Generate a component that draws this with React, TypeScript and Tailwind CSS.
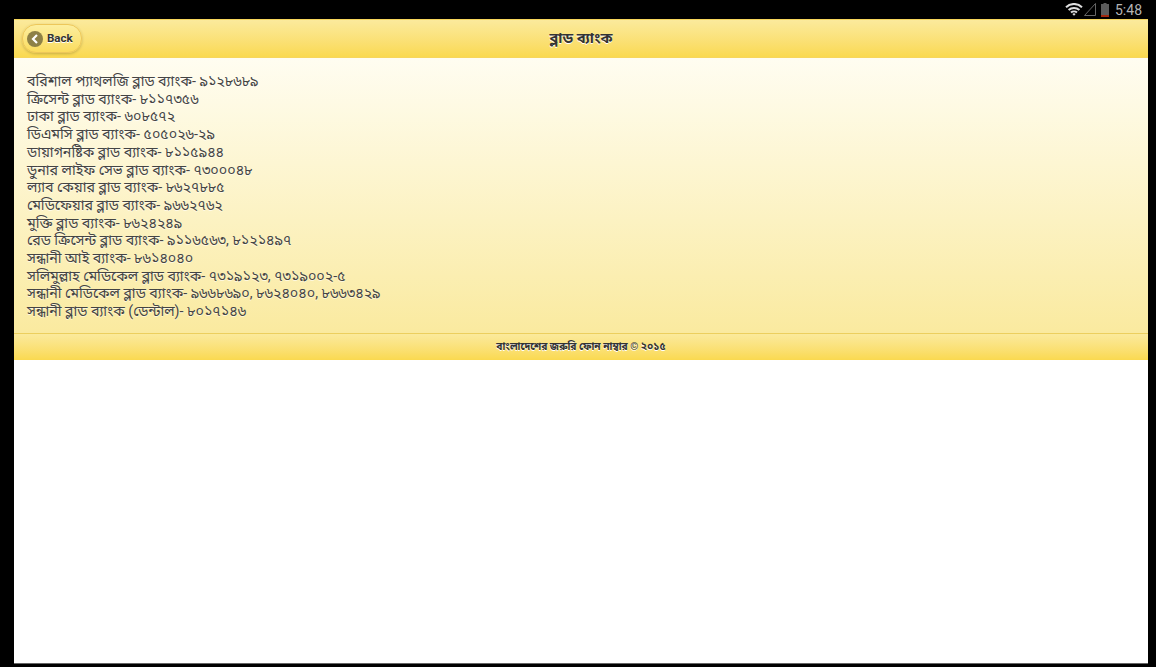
const lines = [
  "বরিশাল প্যাথলজি ব্লাড ব্যাংক- ৯১২৮৬৮৯",
  "ক্রিসেন্ট ব্লাড ব্যাংক- ৮১১৭৩৫৬",
  "ঢাকা ব্লাড ব্যাংক- ৬০৮৫৭২",
  "ডিএমসি ব্লাড ব্যাংক- ৫০৫০২৬-২৯",
  "ডায়াগনষ্টিক ব্লাড ব্যাংক- ৮১১৫৯৪৪",
  "ডুনার লাইফ সেভ ব্লাড ব্যাংক- ৭৩০০০৪৮",
  "ল্যাব কেয়ার ব্লাড ব্যাংক- ৮৬২৭৮৮৫",
  "মেডিফেয়ার ব্লাড ব্যাংক- ৯৬৬২৭৬২",
  "মুক্তি ব্লাড ব্যাংক- ৮৬২৪২৪৯",
  "রেড ক্রিসেন্ট ব্লাড ব্যাংক- ৯১১৬৫৬৩, ৮১২১৪৯৭",
  "সন্ধানী আই ব্যাংক- ৮৬১৪০৪০",
  "সলিমুল্লাহ মেডিকেল ব্লাড ব্যাংক- ৭৩১৯১২৩, ৭৩১৯০০২-৫",
  "সন্ধানী মেডিকেল ব্লাড ব্যাংক- ৯৬৬৮৬৯০, ৮৬২৪০৪০, ৮৬৬৩৪২৯",
  "সন্ধানী ব্লাড ব্যাংক (ডেন্টাল)- ৮০১৭১৪৬",
];

export default function App() {
  return (
    <div className="h-[667px] w-[1156px] overflow-hidden bg-black flex flex-col font-['Roboto','Noto_Sans','Noto_Sans_Bengali','Lohit_Bengali','FreeSans',sans-serif]">
      <div className="h-[19px] shrink-0 flex items-center justify-end pr-[14px] text-[#b5b5b5]">
        <svg width="18" height="13" viewBox="0 0 18 13" fill="none" stroke="#dedede" strokeWidth="2">
          <path d="M1 4.2 A11.5 11.5 0 0 1 17 4.2" />
          <path d="M3.6 7 A8 8 0 0 1 14.4 7" />
          <path d="M6 9.6 A4.4 4.4 0 0 1 12 9.6" />
          <path d="M7.3 11 L9 12.8 L10.7 11 A2.4 2.4 0 0 0 7.3 11 Z" fill="#dedede" stroke="none" />
        </svg>
        <svg className="ml-[1px]" width="12" height="13" viewBox="0 0 12 13" fill="none" stroke="#666" strokeWidth="1"><path d="M0.5 12.5 H11.5 V0.5 Z" /></svg>
        <svg className="ml-[5px]" width="8" height="14" viewBox="0 0 8 14"><path d="M2.5 0 H5.5 V1 H8 V14 H0 V1 H2.5 Z" fill="#5c5c5c" /><rect x="0" y="12" width="8" height="2" fill="#a3290f" /></svg>
        <span className="ml-[6px] text-[14px] leading-none">5:48</span>
      </div>
      <div className="flex-1 ml-[14px] mr-[8px] mb-[3px] bg-white border-b border-[#666] flex flex-col">
        <header className="relative h-[39px] shrink-0 flex items-center justify-center border-t border-b border-[#f7d65c] bg-gradient-to-b from-[#fbea9c] to-[#fad94f]">
          <button className="absolute left-[8px] top-[4px] h-[29px] w-[60px] flex items-center gap-[4px] pl-[4px] rounded-[14px] border border-[#edc75a] bg-gradient-to-b from-[#fcee9e] to-[#fbdc5c] shadow-[0_1px_3px_rgba(0,0,0,0.2)]">
            <span className="w-[16px] h-[16px] rounded-full bg-[#8e8147] flex items-center justify-center">
              <svg width="8" height="10" viewBox="0 0 8 10" fill="none" stroke="white" strokeWidth="2.2"><path d="M6 1 L2 5 L6 9" /></svg>
            </span>
            <span className="text-[11.5px] font-bold text-[#333] [text-shadow:0_1px_0_#fff]">Back</span>
          </button>
          <h1 className="text-[14.7px] font-bold text-[#333] [text-shadow:0_1px_0_#fff]">ব্লাড ব্যাংক</h1>
        </header>
        <main className="h-[275px] shrink-0 pl-[13px] pt-[15px] text-[14.25px] leading-[17.7px] text-[#444] [text-shadow:0_1px_0_rgba(255,255,255,0.6)] bg-gradient-to-b from-[#fffdf1] to-[#faea9f]">
          {lines.map((l) => (
            <div key={l}>{l}</div>
          ))}
        </main>
        <footer className="h-[27px] shrink-0 flex items-center justify-center pb-[1px] border-t border-[#eccf5e] bg-gradient-to-b from-[#fbea9c] to-[#fad94f]">
          <span className="text-[10.2px] font-bold text-[#333] [text-shadow:0_1px_0_#fff]">বাংলাদেশের জরুরি ফোন নাম্বার © ২০১৫</span>
        </footer>
      </div>
    </div>
  );
}
